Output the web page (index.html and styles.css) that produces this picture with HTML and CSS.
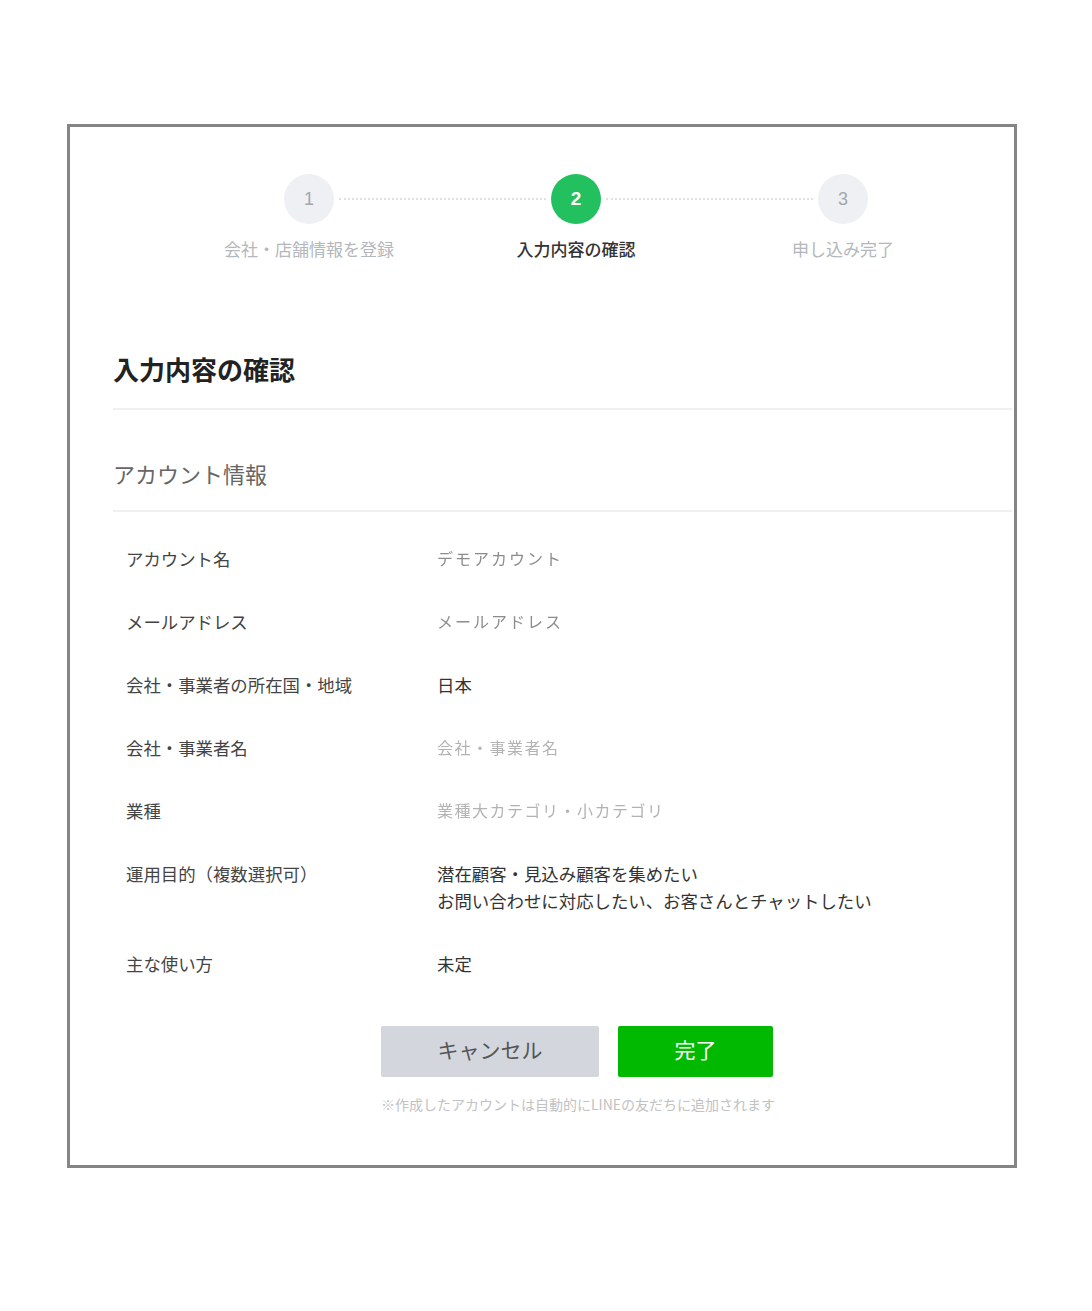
FILE: index.html
```html
<!DOCTYPE html>
<html lang="ja">
<head>
  <meta charset="utf-8">
  <link rel="stylesheet" href="styles.css">
</head>
<body>
  <div class="frame">
    <div class="steps">
      <div class="step done">
        <div class="step-num">1</div>
        <div class="step-label">会社・店舗情報を登録</div>
      </div>
      <div class="step-line"></div>
      <div class="step active">
        <div class="step-num">2</div>
        <div class="step-label">入力内容の確認</div>
      </div>
      <div class="step-line"></div>
      <div class="step">
        <div class="step-num">3</div>
        <div class="step-label">申し込み完了</div>
      </div>
    </div>

    <h1 class="page-title">入力内容の確認</h1>
    <h2 class="section-title">アカウント情報</h2>

    <div class="info-list">
      <div class="info-row">
        <div class="info-label">アカウント名</div>
        <div class="info-value masked">デモアカウント</div>
      </div>
      <div class="info-row">
        <div class="info-label">メールアドレス</div>
        <div class="info-value masked">メールアドレス</div>
      </div>
      <div class="info-row">
        <div class="info-label">会社・事業者の所在国・地域</div>
        <div class="info-value">日本</div>
      </div>
      <div class="info-row">
        <div class="info-label">会社・事業者名</div>
        <div class="info-value masked light">会社・事業者名</div>
      </div>
      <div class="info-row">
        <div class="info-label">業種</div>
        <div class="info-value masked light">業種大カテゴリ・小カテゴリ</div>
      </div>
      <div class="info-row">
        <div class="info-label">運用目的（複数選択可）</div>
        <div class="info-value">潜在顧客・見込み顧客を集めたい<br>お問い合わせに対応したい、お客さんとチャットしたい</div>
      </div>
      <div class="info-row">
        <div class="info-label">主な使い方</div>
        <div class="info-value">未定</div>
      </div>
    </div>

    <div class="actions">
      <div class="btn-row">
        <button class="btn btn-cancel">キャンセル</button>
        <button class="btn btn-done">完了</button>
      </div>
      <p class="note">※作成したアカウントは自動的にLINEの友だちに追加されます</p>
    </div>
  </div>
</body>
</html>
```

FILE: styles.css
```css
body {
  margin: 0;
  background: #fff;
  font-family: "Noto Sans CJK JP", "Noto Sans", sans-serif;
  color: #333;
}
.frame {
  box-sizing: border-box;
  width: 950px;
  height: 1044px;
  margin: 124px 0 0 67px;
  border: 3px solid #858585;
  padding-top: 47px;
}
.steps {
  display: flex;
  width: 584px;
  margin-left: 214px;
}
.step {
  width: 50px;
  display: flex;
  flex-direction: column;
  align-items: center;
}
.step-num {
  width: 50px;
  height: 50px;
  border-radius: 50%;
  background: #eef0f4;
  color: #a3a7ad;
  font-family: "Liberation Sans", Arial, sans-serif;
  font-size: 18px;
  line-height: 50px;
  text-align: center;
}
.step.active .step-num {
  background: #22c05f;
  color: #fff;
  font-weight: bold;
  font-size: 19px;
}
.step-label {
  margin-top: 13px;
  font-size: 17px;
  line-height: 24px;
  color: #b4b7bc;
  white-space: nowrap;
  display: flex;
  justify-content: center;
  width: 50px;
}
.step.active .step-label {
  color: #333;
  font-weight: 500;
}
.step-line {
  flex: 1;
  align-self: flex-start;
  margin: 24px 5px 0;
  border-top: 2px dotted #dfe1e5;
}
.page-title {
  margin: 90px 2px 0 43px;
  padding-bottom: 21px;
  border-bottom: 2px solid #f0f0f0;
  font-size: 26px;
  line-height: 36px;
  font-weight: bold;
  color: #222;
}
.section-title {
  margin: 0 2px 0 43px;
  padding: 47px 0 21px;
  border-bottom: 2px solid #f0f0f0;
  font-size: 22px;
  line-height: 32px;
  font-weight: normal;
  color: #666;
}
.info-list {
  display: flex;
  flex-direction: column;
  gap: 36px;
  padding: 33px 0 0 56px;
}
.info-row {
  display: flex;
  font-size: 17.4px;
  line-height: 27px;
}
.info-label {
  width: 311px;
  flex-shrink: 0;
  color: #444;
}
.info-value {
  color: #333;
}
.info-value.masked {
  color: #8d8d8d;
  font-size: 16px;
  letter-spacing: 2px;
  filter: blur(0.3px);
}
.info-value.light {
  color: #b3b3b3;
  letter-spacing: 1.5px;
}
.actions {
  margin: 49px 0 0 311px;
  width: 392px;
}
.btn-row {
  display: flex;
  gap: 19px;
}
.btn {
  height: 51px;
  padding: 0 0 5px;
  border: none;
  border-radius: 2px;
  font-family: inherit;
  font-size: 21px;
  cursor: pointer;
}
.btn-cancel {
  width: 218px;
  background: #d3d7dd;
  color: #555;
}
.btn-done {
  width: 155px;
  background: #00b900;
  color: #fff;
}
.note {
  margin: 17px 0 0;
  font-size: 14px;
  line-height: 20px;
  color: #c2c2c2;
  white-space: nowrap;
}
```
